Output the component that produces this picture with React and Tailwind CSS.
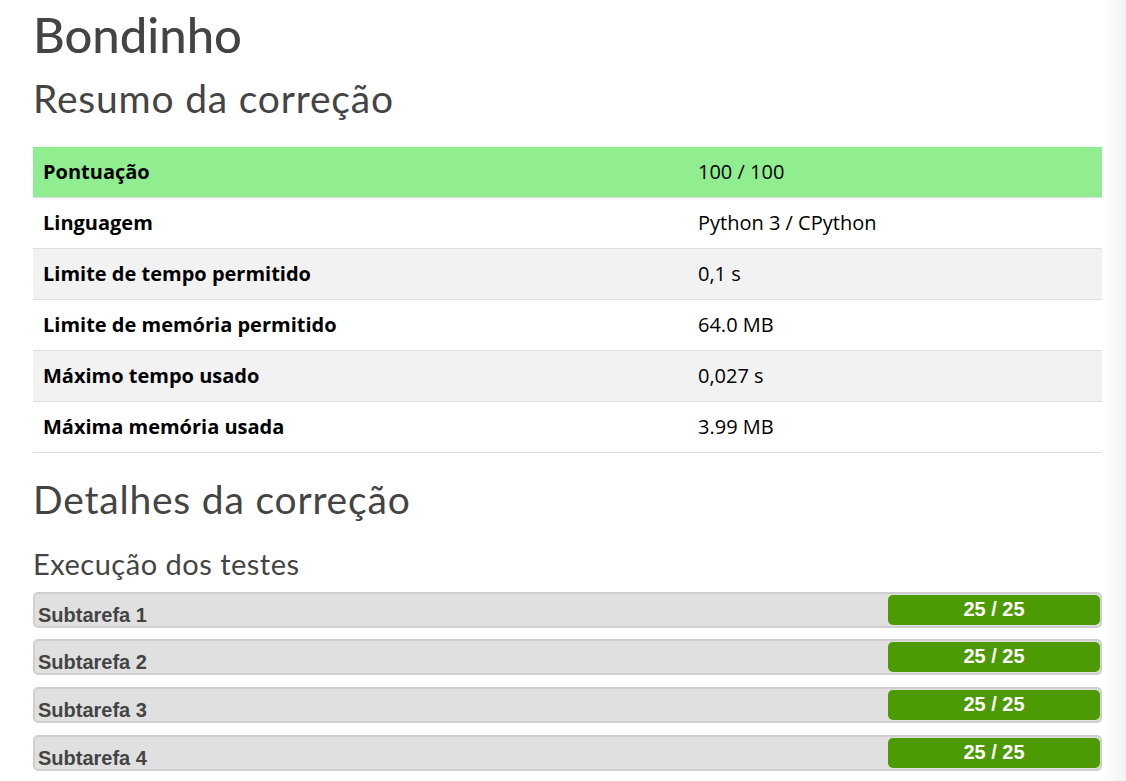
import React from "react";

const summary = [
  { label: "Pontuação", value: "100 / 100", highlight: true },
  { label: "Linguagem", value: "Python 3 / CPython" },
  { label: "Limite de tempo permitido", value: "0,1 s" },
  { label: "Limite de memória permitido", value: "64.0 MB" },
  { label: "Máximo tempo usado", value: "0,027 s" },
  { label: "Máxima memória usada", value: "3.99 MB" },
];

const subtasks = [
  { name: "Subtarefa 1", score: "25 / 25" },
  { name: "Subtarefa 2", score: "25 / 25" },
  { name: "Subtarefa 3", score: "25 / 25" },
  { name: "Subtarefa 4", score: "25 / 25" },
];

const heading = { fontFamily: "Lato, 'Noto Sans', sans-serif" };

const App = () => {
  return (
    <div className="flex min-h-[781px] bg-white">
      <div className="flex-1 pl-[33px] pt-[4px] text-[#444]">
        <h1 className="text-[49px] leading-[60px] font-medium" style={heading}>
          Bondinho
        </h1>
        <h2 className="mt-[12px] text-[39px] leading-[44px] font-normal tracking-[0.8px]" style={heading}>
          Resumo da correção
        </h2>

        <table
          className="mt-[27px] w-full border-collapse text-[20px] text-black"
          style={{ fontFamily: "'Open Sans', sans-serif" }}
        >
          <tbody>
            {summary.map((row, i) => (
              <tr
                key={row.label}
                className={
                  row.highlight
                    ? "h-[50px] bg-[#90ee90] border-b border-[#dddddd]"
                    : i % 2 === 0
                    ? "h-[51px] bg-[#f2f2f2] border-b border-[#dddddd]"
                    : "h-[51px] bg-white border-b border-[#dddddd]"
                }
              >
                <td className="w-[655px] pl-[10px] font-bold">{row.label}</td>
                <td className="pl-[10px]">{row.value}</td>
              </tr>
            ))}
          </tbody>
        </table>

        <h2 className="mt-[24px] text-[39px] leading-[44px] font-normal tracking-[0.8px]" style={heading}>
          Detalhes da correção
        </h2>
        <h3 className="mt-[26px] text-[29px] leading-[34px] font-normal tracking-[0.5px]" style={heading}>
          Execução dos testes
        </h3>

        <div className="mt-[11px] flex flex-col gap-[11.7px]">
          {subtasks.map((s) => (
            <div
              key={s.name}
              className="flex h-[36px] items-stretch justify-between rounded-[5px] border-2 border-[#cfcfcf] bg-[#e0e0e0]"
              style={{ fontFamily: "'Liberation Sans', Arial, sans-serif" }}
            >
              <span className="self-end pl-[3px] text-[20px] font-bold leading-[22px] text-[#444]">
                {s.name}
              </span>
              <span className="my-[1px] flex w-[212px] items-center justify-center rounded-[5px] bg-[#4c9a04] pb-[2px] text-[20px] font-bold leading-[22px] text-white">
                {s.score}
              </span>
            </div>
          ))}
        </div>
      </div>
      <div className="w-[24px] bg-gradient-to-r from-white to-[#f2f2f2]" />
    </div>
  );
};

export default App;
